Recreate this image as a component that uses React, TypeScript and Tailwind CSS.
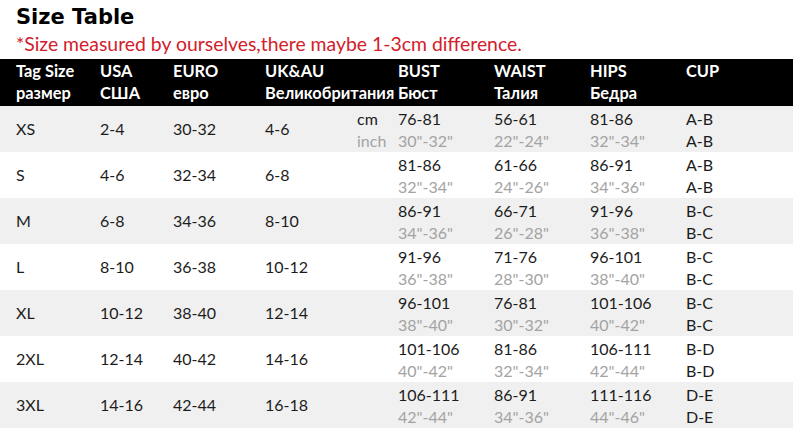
import React from "react";

const rows = [
  { tag: "XS", usa: "2-4", euro: "30-32", uk: "4-6", unit: true, bust: ["76-81", '30"-32"'], waist: ["56-61", '22"-24"'], hips: ["81-86", '32"-34"'], cup: ["A-B", "A-B"] },
  { tag: "S", usa: "4-6", euro: "32-34", uk: "6-8", bust: ["81-86", '32"-34"'], waist: ["61-66", '24"-26"'], hips: ["86-91", '34"-36"'], cup: ["A-B", "A-B"] },
  { tag: "M", usa: "6-8", euro: "34-36", uk: "8-10", bust: ["86-91", '34"-36"'], waist: ["66-71", '26"-28"'], hips: ["91-96", '36"-38"'], cup: ["B-C", "B-C"] },
  { tag: "L", usa: "8-10", euro: "36-38", uk: "10-12", bust: ["91-96", '36"-38"'], waist: ["71-76", '28"-30"'], hips: ["96-101", '38"-40"'], cup: ["B-C", "B-C"] },
  { tag: "XL", usa: "10-12", euro: "38-40", uk: "12-14", bust: ["96-101", '38"-40"'], waist: ["76-81", '30"-32"'], hips: ["101-106", '40"-42"'], cup: ["B-C", "B-C"] },
  { tag: "2XL", usa: "12-14", euro: "40-42", uk: "14-16", bust: ["101-106", '40"-42"'], waist: ["81-86", '32"-34"'], hips: ["106-111", '42"-44"'], cup: ["B-D", "B-D"] },
  { tag: "3XL", usa: "14-16", euro: "42-44", uk: "16-18", bust: ["106-111", '42"-44"'], waist: ["86-91", '34"-36"'], hips: ["111-116", '44"-46"'], cup: ["D-E", "D-E"] },
];

const grid = "grid grid-cols-[84px_73px_92px_92px_41px_96px_96px_96px_1fr] pl-4";

function Pair({ v }: { v: string[] }) {
  return (
    <div className="flex flex-col whitespace-nowrap">
      <span className="h-[22px] leading-[22px] text-[#1c1c1c]">{v[0]}</span>
      <span className="h-[22px] leading-[22px] text-[#a3a3a3]">{v[1]}</span>
    </div>
  );
}

export default function App() {
  return (
    <div className="w-[793px] h-[431px] bg-white overflow-hidden" style={{ fontFamily: "Lato, 'Open Sans', sans-serif" }}>
      <div className="pl-4 pt-[3px] h-[31px] text-[21px] font-bold leading-[28px] text-black" style={{ fontFamily: "'DejaVu Sans', sans-serif" }}>
        Size Table
      </div>
      <div className="pl-4 h-[28px] text-[19.4px] leading-[26px] text-[#d2202c] whitespace-nowrap">
        *Size measured by ourselves,there maybe 1-3cm difference.
      </div>
      <div className={`${grid} bg-black text-white font-bold text-[16.4px] pt-[1px] pb-[2px] h-[47px]`}>
        {[
          ["Tag Size", "размер"],
          ["USA", "США"],
          ["EURO", "евро"],
          ["UK&AU", "Великобритания"],
          ["", ""],
          ["BUST", "Бюст"],
          ["WAIST", "Талия"],
          ["HIPS", "Бедра"],
          ["CUP", ""],
        ].map((c, i) => (
          <div key={i} className="flex flex-col whitespace-nowrap">
            <span className="h-[22px] leading-[22px]">{c[0]}</span>
            <span className="h-[22px] leading-[22px]">{c[1]}</span>
          </div>
        ))}
      </div>
      {rows.map((r, i) => (
        <div key={r.tag} className={`${grid} h-[46px] pt-[2px] text-[16px] ${i % 2 === 0 ? "bg-[#f0f0f0]" : "bg-white"}`}>
          <div className="flex items-center text-[#1c1c1c] -mt-[2px]">{r.tag}</div>
          <div className="flex items-center text-[#1c1c1c] -mt-[2px]">{r.usa}</div>
          <div className="flex items-center text-[#1c1c1c] -mt-[2px]">{r.euro}</div>
          <div className="flex items-center text-[#1c1c1c] -mt-[2px]">{r.uk}</div>
          <div>
            {r.unit && <Pair v={["cm", "inch"]} />}
          </div>
          <Pair v={r.bust} />
          <Pair v={r.waist} />
          <Pair v={r.hips} />
          <div className="flex flex-col text-[#1c1c1c]">
            <span className="h-[22px] leading-[22px]">{r.cup[0]}</span>
            <span className="h-[22px] leading-[22px]">{r.cup[1]}</span>
          </div>
        </div>
      ))}
    </div>
  );
}
